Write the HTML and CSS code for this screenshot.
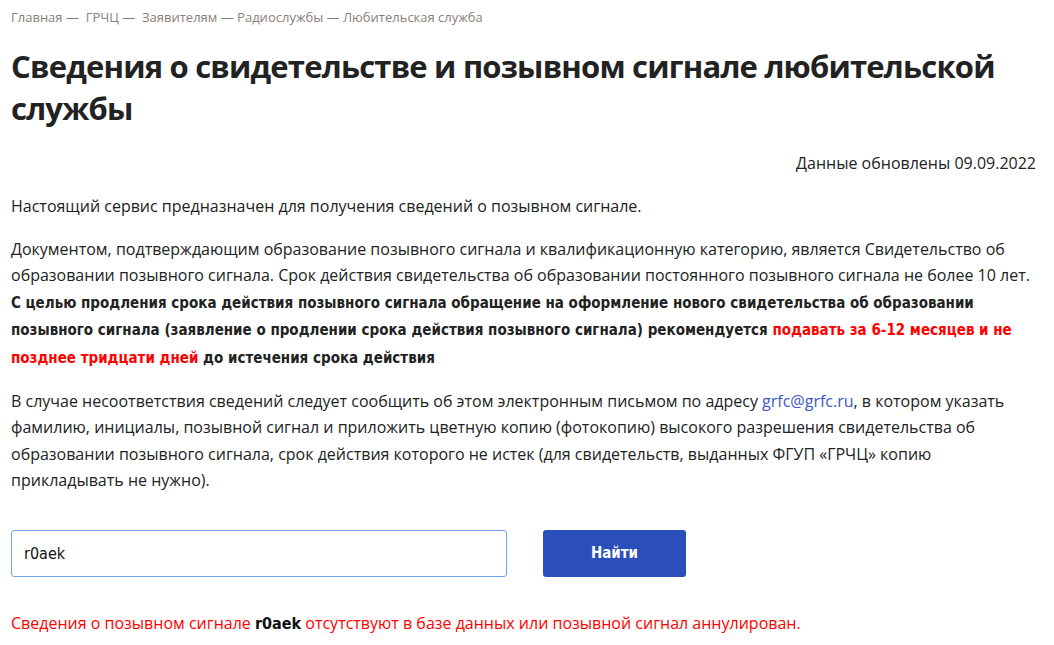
FILE: index.html
```html
<!DOCTYPE html>
<html lang="ru">
<head>
  <meta charset="UTF-8" />
  <title>Любительская служба</title>
  <link rel="stylesheet" href="styles.css">
</head>
<body>
<div class="page">
  <nav class="crumbs">
    <a href="#">Главная</a> — &nbsp;<a href="#">ГРЧЦ</a> — &nbsp;<a href="#">Заявителям</a> — <a href="#">Радиослужбы</a> — <span>Любительская служба</span>
  </nav>

  <h1>Сведения о свидетельстве и позывном сигнале любительской службы</h1>

  <div class="updated">Данные обновлены 09.09.2022</div>

  <p class="first">Настоящий сервис предназначен для получения сведений о позывном сигнале.</p>

  <p>Документом, подтверждающим образование позывного сигнала и квалификационную категорию, является Свидетельство об образовании позывного сигнала. Срок действия свидетельства об образовании постоянного позывного сигнала не более 10 лет. <b>С целью продления срока действия позывного сигнала обращение на оформление нового свидетельства об образовании позывного сигнала (заявление о продлении срока действия позывного сигнала) рекомендуется <span class="red">подавать за 6-12 месяцев и не позднее тридцати дней</span> до истечения срока действия</b></p>

  <p>В случае несоответствия сведений следует сообщить об этом электронным письмом по адресу <a class="mail" href="#">grfc@grfc.ru</a>, в котором указать фамилию, инициалы, позывной сигнал и приложить цветную копию (фотокопию) высокого разрешения свидетельства об образовании позывного сигнала, срок действия которого не истек (для свидетельств, выданных ФГУП «ГРЧЦ» копию прикладывать не нужно).</p>

  <form class="search" onsubmit="return false">
    <input type="text" value="r0aek" />
    <button type="submit">Найти</button>
  </form>

  <div class="result">Сведения о позывном сигнале <b>r0aek</b> отсутствуют в базе данных или позывной сигнал аннулирован.</div>
</div>
</body>
</html>
```

FILE: styles.css
```css
html, body {
  margin: 0;
  padding: 0;
  background: #fff;
  color: #222;
  font-family: "Open Sans", "Noto Sans", sans-serif;
}

.page {
  padding: 0 18px 0 11px;
}

.crumbs {
  padding-top: 8px;
  font-size: 13px;
  line-height: 18px;
  color: #8a8078;
}

.crumbs a {
  color: #8a8078;
  text-decoration: none;
}

h1 {
  margin: 19px 0 0;
  font-family: "Open Sans", sans-serif;
  font-size: 31px;
  line-height: 42px;
  letter-spacing: -0.8px;
  font-weight: bold;
  color: #222;
}

.updated {
  margin-top: 24px;
  text-align: right;
  font-size: 16px;
  line-height: 20px;
}

p {
  margin: 16px 0 0;
  font-size: 16px;
  line-height: 26.6px;
}

p.first {
  margin-top: 20px;
}

b {
  font-family: "DejaVu Sans", sans-serif;
  font-stretch: condensed;
  font-size: 15px;
}

.red {
  color: #f00;
}

.mail {
  color: #3a58c4;
  text-decoration: none;
}

.search {
  display: flex;
  gap: 36px;
  margin-top: 36px;
}

.search input {
  width: 496px;
  height: 47px;
  box-sizing: border-box;
  border: 1px solid #6ea2f0;
  border-radius: 3px;
  padding: 0 12px;
  font-family: "DejaVu Sans", sans-serif;
  font-stretch: condensed;
  font-size: 16px;
  color: #111;
  outline: none;
}

.search button {
  width: 143px;
  height: 47px;
  border: none;
  border-radius: 3px;
  background: #2b4fba;
  color: #fff;
  font-family: "DejaVu Sans", sans-serif;
  font-stretch: condensed;
  font-weight: bold;
  font-size: 15px;
  cursor: pointer;
}

.result {
  margin-top: 33px;
  font-size: 16px;
  line-height: 27px;
  color: #f00;
}

.result b {
  color: #111;
  font-size: 16px;
}
```
